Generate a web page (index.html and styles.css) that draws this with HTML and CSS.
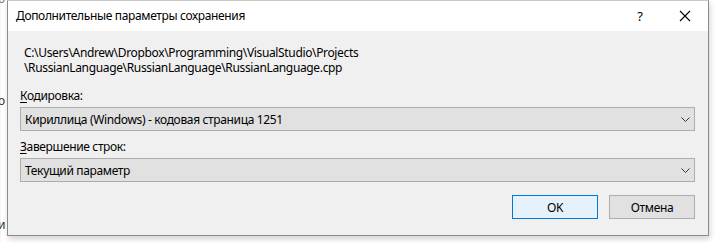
FILE: index.html
```html
<!DOCTYPE html>
<html lang="ru">
<head>
    <meta charset="UTF-8">
    <title>Дополнительные параметры сохранения</title>
    <link rel="stylesheet" href="styles.css">
</head>
<body>
    <div class="desktop">
        <div class="behind">
            <span class="frag frag-top">о</span>
            <span class="frag frag-mid">о</span>
            <span class="frag frag-low">и</span>
        </div>

        <div class="dialog">
            <div class="titlebar">
                <span class="title">Дополнительные параметры сохранения</span>
                <div class="title-buttons">
                    <span class="tb-btn help">?</span>
                    <span class="tb-btn close">
                        <svg width="12" height="12" viewBox="0 0 12 12">
                            <path d="M1 1 L11 11 M11 1 L1 11" stroke="#000" stroke-width="1.1" fill="none"/>
                        </svg>
                    </span>
                </div>
            </div>

            <div class="body">
                <div class="path">
                    C:\Users\Andrew\Dropbox\Programming\VisualStudio\Projects<br>
                    \RussianLanguage\RussianLanguage\RussianLanguage.cpp
                </div>

                <div class="field">
                    <label><u>К</u>одировка:</label>
                    <div class="combo">
                        <span>Кириллица (Windows) - кодовая страница 1251</span>
                        <svg class="chevron" width="9" height="5" viewBox="0 0 9 5">
                            <path d="M0.5 0.5 L4.5 4.5 L8.5 0.5" stroke="#333" stroke-width="1" fill="none"/>
                        </svg>
                    </div>
                </div>

                <div class="field">
                    <label><u>З</u>авершение строк:</label>
                    <div class="combo">
                        <span>Текущий параметр</span>
                        <svg class="chevron" width="9" height="5" viewBox="0 0 9 5">
                            <path d="M0.5 0.5 L4.5 4.5 L8.5 0.5" stroke="#333" stroke-width="1" fill="none"/>
                        </svg>
                    </div>
                </div>

                <div class="buttons">
                    <button class="btn btn-default">OK</button>
                    <button class="btn">Отмена</button>
                </div>
            </div>
        </div>
    </div>
</body>
</html>
```

FILE: styles.css
```css
* {
    margin: 0;
    padding: 0;
    box-sizing: border-box;
}

body {
    font-family: "Noto Sans", "Open Sans", sans-serif;
    font-size: 12px;
    letter-spacing: -0.35px;
    color: #000;
    background-color: #ffffff;
    width: 716px;
    height: 243px;
    overflow: hidden;
}

.desktop {
    position: relative;
    width: 716px;
    height: 243px;
}

.behind {
    height: 100%;
    border-left: 1px solid #f4f4f4;
}

.frag {
    position: absolute;
    left: -2px;
    font-size: 12px;
    line-height: 12px;
    color: #333;
}

.frag-top { top: -7px; color: #777; }
.frag-mid { top: 95px; }
.frag-low { top: 219px; }

.dialog {
    position: absolute;
    left: 7px;
    top: 0;
    width: 702px;
    height: 236px;
    background-color: #f0f0f0;
    border: 1px solid #8c8c8c;
    border-top-color: #c8c8c8;
    box-shadow: 1px 3px 6px rgba(0,0,0,0.18);
    display: flex;
    flex-direction: column;
}

.titlebar {
    height: 30px;
    background-color: #ffffff;
    display: flex;
    align-items: center;
    justify-content: space-between;
    padding-left: 8px;
}

.title {
    font-size: 12px;
    padding-bottom: 1px;
}

.title-buttons {
    display: flex;
    height: 100%;
}

.tb-btn {
    width: 46px;
    height: 100%;
    display: flex;
    align-items: center;
    justify-content: center;
}

.help {
    font-size: 13px;
    padding-bottom: 1px;
    padding-left: 2px;
}

.body {
    flex: 1;
    padding: 14px 13px 0 12px;
    display: flex;
    flex-direction: column;
}

.path {
    padding-left: 4px;
    line-height: 15px;
    margin-bottom: 13px;
}

.field {
    margin-bottom: 8px;
}

.field label {
    display: block;
    line-height: 15px;
    margin-bottom: 4px;
}

.field label u {
    text-decoration-thickness: 1px;
    text-underline-offset: 2px;
}

.combo {
    height: 24px;
    background-color: #e1e1e1;
    border: 1px solid #adadad;
    display: flex;
    align-items: center;
    justify-content: space-between;
    padding: 0 4px 0 4px;
}

.buttons {
    display: flex;
    justify-content: flex-end;
    gap: 11px;
    margin-top: 5px;
}

.btn {
    width: 86px;
    height: 24px;
    font-family: inherit;
    font-size: 12px;
    letter-spacing: -0.35px;
    color: #000;
    background-color: #e1e1e1;
    border: 1px solid #adadad;
}

.btn-default {
    background-color: #e5f1fb;
    border-color: #0078d7;
}
```
